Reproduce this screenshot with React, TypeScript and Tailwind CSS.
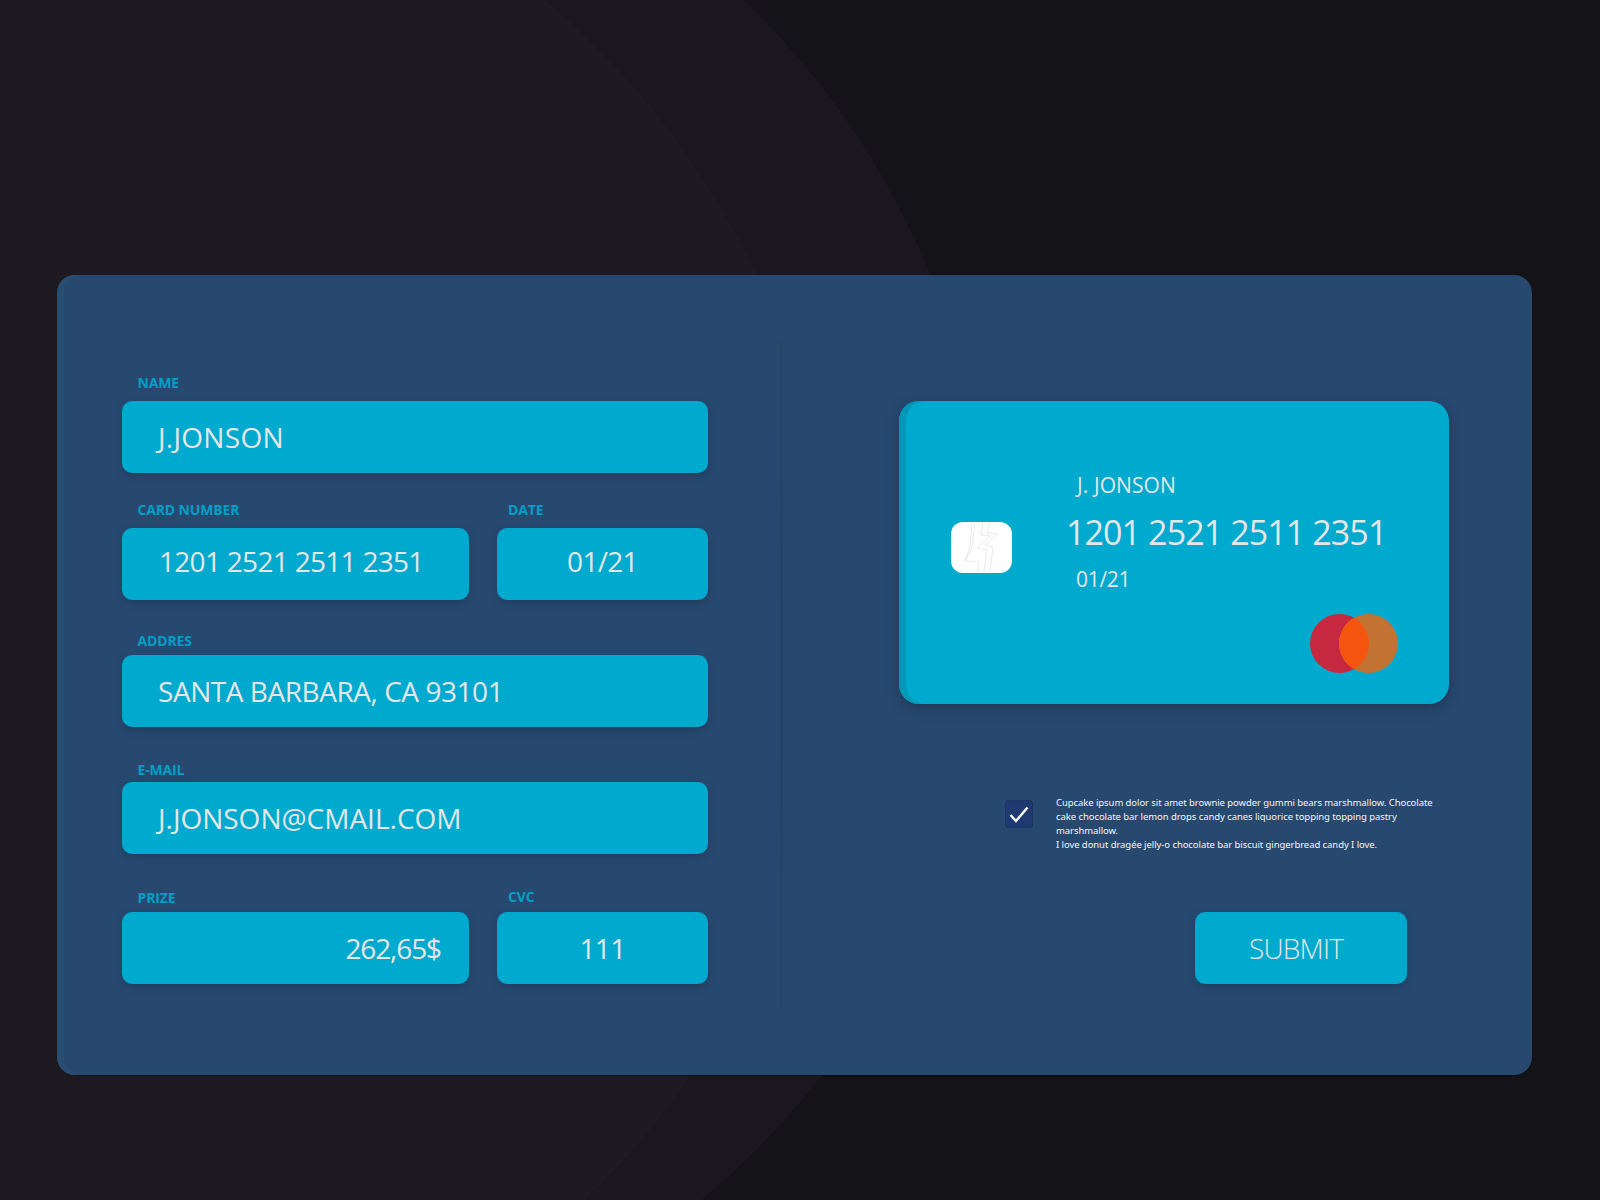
const labelClass =
  "h-5 text-[14px] leading-5 font-bold tracking-[-0.15px] text-[#009fc7] font-['Open_Sans',sans-serif]";
const boxClass =
  "flex h-[72px] items-center rounded-[10px] bg-[#00a9ce] text-[28px] text-[#e6e6e6] shadow-[0_3px_8px_rgba(0,0,0,0.18)] font-['Open_Sans',sans-serif]";

function MastercardLogo() {
  return (
    <svg width="88" height="59" viewBox="0 0 88 59" aria-hidden>
      <circle cx="29.5" cy="29.5" r="29.5" fill="#c5283f" />
      <circle cx="58.5" cy="29.5" r="29.5" fill="#c27333" />
      <path d="M44 3.81A29.5 29.5 0 0 1 44 55.19A29.5 29.5 0 0 1 44 3.81Z" fill="#f5550f" />
    </svg>
  );
}

function Chip() {
  return (
    <div className="mt-[121px] ml-[52px] h-[51px] w-[61px] shrink-0 rounded-[12px] bg-white">
      <svg width="61" height="51" viewBox="0 0 61 51" fill="none" stroke="#dadada" strokeWidth="0.6" aria-hidden>
        <path d="M39 1L36 11L47 12L34 23L42 25L39 50" />
        <path d="M32 1L30 13L40 14L26 26L36 28L33 50" />
        <path d="M24 1L21 26L14 39L28 40L26 50" />
        <path d="M21 1L19 24L14 39" />
      </svg>
    </div>
  );
}

export default function App() {
  return (
    <div className="relative h-[1200px] w-full overflow-hidden bg-[#131318] pt-[275px]">
      {/* background circles */}
      <div aria-hidden className="absolute left-[-623px] top-[-226px] h-[1614px] w-[1614px] rounded-full bg-[#1a181e]" />
      <div aria-hidden className="absolute left-[-781px] top-[-189px] h-[1614px] w-[1614px] rounded-full bg-[#1d1b21]" />

      <div className="relative ml-[57px] flex h-[800px] w-[1475px] rounded-[18px] bg-[#274970] shadow-[inset_7px_0_0_#2a4d72,0_1px_2px_rgba(0,0,0,0.3)]">
        {/* form */}
        <div className="w-[723px] shrink-0 pl-[65px] pt-[98px]">
          <div className="w-[586px]">
            <div className={`${labelClass} mb-2 pl-[15.5px]`}>NAME</div>
            <div className={`${boxClass} pl-9 tracking-[0.3px]`}>J.JONSON</div>

            <div className="mt-[27px] flex gap-7">
              <div className="w-[347px]">
                <div className={`${labelClass} mb-2 pl-[15.5px]`}>CARD NUMBER</div>
                <div className={`${boxClass} pl-[37px] pb-[6px] tracking-[-0.7px]`}>1201 2521 2511 2351</div>
              </div>
              <div className="w-[211px]">
                <div className={`${labelClass} mb-2 pl-[11px]`}>DATE</div>
                <div className={`${boxClass} justify-center pb-[6px] tracking-[-0.7px]`}>01/21</div>
              </div>
            </div>

            <div className="mt-[31px]">
              <div className={`${labelClass} mb-1 pl-[15.5px]`}>ADDRES</div>
              <div className={`${boxClass} pl-9 tracking-[-0.45px]`}>SANTA BARBARA, CA 93101</div>
            </div>

            <div className="mt-[33px]">
              <div className={`${labelClass} mb-0.5 pl-[15.5px]`}>E-MAIL</div>
              <div className={`${boxClass} pl-9`}>J.JONSON@CMAIL.COM</div>
            </div>

            <div className="mt-[34px] flex gap-7">
              <div className="w-[347px]">
                <div className={`${labelClass} mb-1 pl-[15.5px]`}>PRIZE</div>
                <div className={`${boxClass} justify-end pr-7 tracking-[-1.1px]`}>262,65$</div>
              </div>
              <div className="w-[211px]">
                <div className={`${labelClass} mb-1 -translate-y-px pl-[11px]`}>CVC</div>
                <div className={`${boxClass} justify-center tracking-[-0.7px]`}>111</div>
              </div>
            </div>
          </div>
        </div>

        {/* divider */}
        <div className="my-[65px] w-[3px] shrink-0 bg-gradient-to-b from-[#264768] via-[#224266] to-[#264768]" />

        {/* card side */}
        <div className="flex-1 pl-[116px] pt-[126px]">
          <div className="flex h-[303px] w-[550px] rounded-[20px] bg-[#00a9ce] text-[#e6e6e6] shadow-[inset_7px_0_0_#0398b8,0_4px_14px_rgba(0,0,0,0.25)] font-['Open_Sans',sans-serif]">
            <Chip />
            <div className="ml-[54px] flex flex-1 flex-col pt-[69px]">
              <div className="pl-[11px] text-[21px] leading-[30px] tracking-[0.1px]">J. JONSON</div>
              <div className="mt-[9px] text-[34px] leading-[46px] tracking-[-0.9px]">1201 2521 2511 2351</div>
              <div className="mt-[9px] pl-[10px] text-[21px] leading-[30px] tracking-[-0.3px]">01/21</div>
              <div className="mt-5 flex justify-end pr-[51px]">
                <MastercardLogo />
              </div>
            </div>
          </div>

          <div className="ml-[106px] mt-[96px] flex gap-[23px]">
            <div className="flex h-7 w-7 shrink-0 items-center justify-center rounded-[3px] border border-[#1c3563] bg-[#1f3a70]">
              <svg width="20" height="17" viewBox="0 0 20 17" fill="none" stroke="#ffffff" strokeWidth="2.4" aria-hidden>
                <path d="M1.5 9L7 15L18.5 1.5" />
              </svg>
            </div>
            <p className="-mt-[4px] text-[9.5px] leading-[14px] tracking-[-0.07px] whitespace-nowrap text-[#f4f4f4] font-['Noto_Sans',sans-serif]">
              Cupcake ipsum dolor sit amet brownie powder gummi bears marshmallow. Chocolate
              <br />
              cake chocolate bar lemon drops candy canes liquorice topping topping pastry
              <br />
              marshmallow.
              <br />I love donut dragée jelly-o chocolate bar biscuit gingerbread candy I love.
            </p>
          </div>

          <div className={`${boxClass} ml-[296px] mt-[60px] w-[212px] justify-center pr-[10px] font-light tracking-[-0.8px]`}>SUBMIT</div>
        </div>
      </div>
    </div>
  );
}
